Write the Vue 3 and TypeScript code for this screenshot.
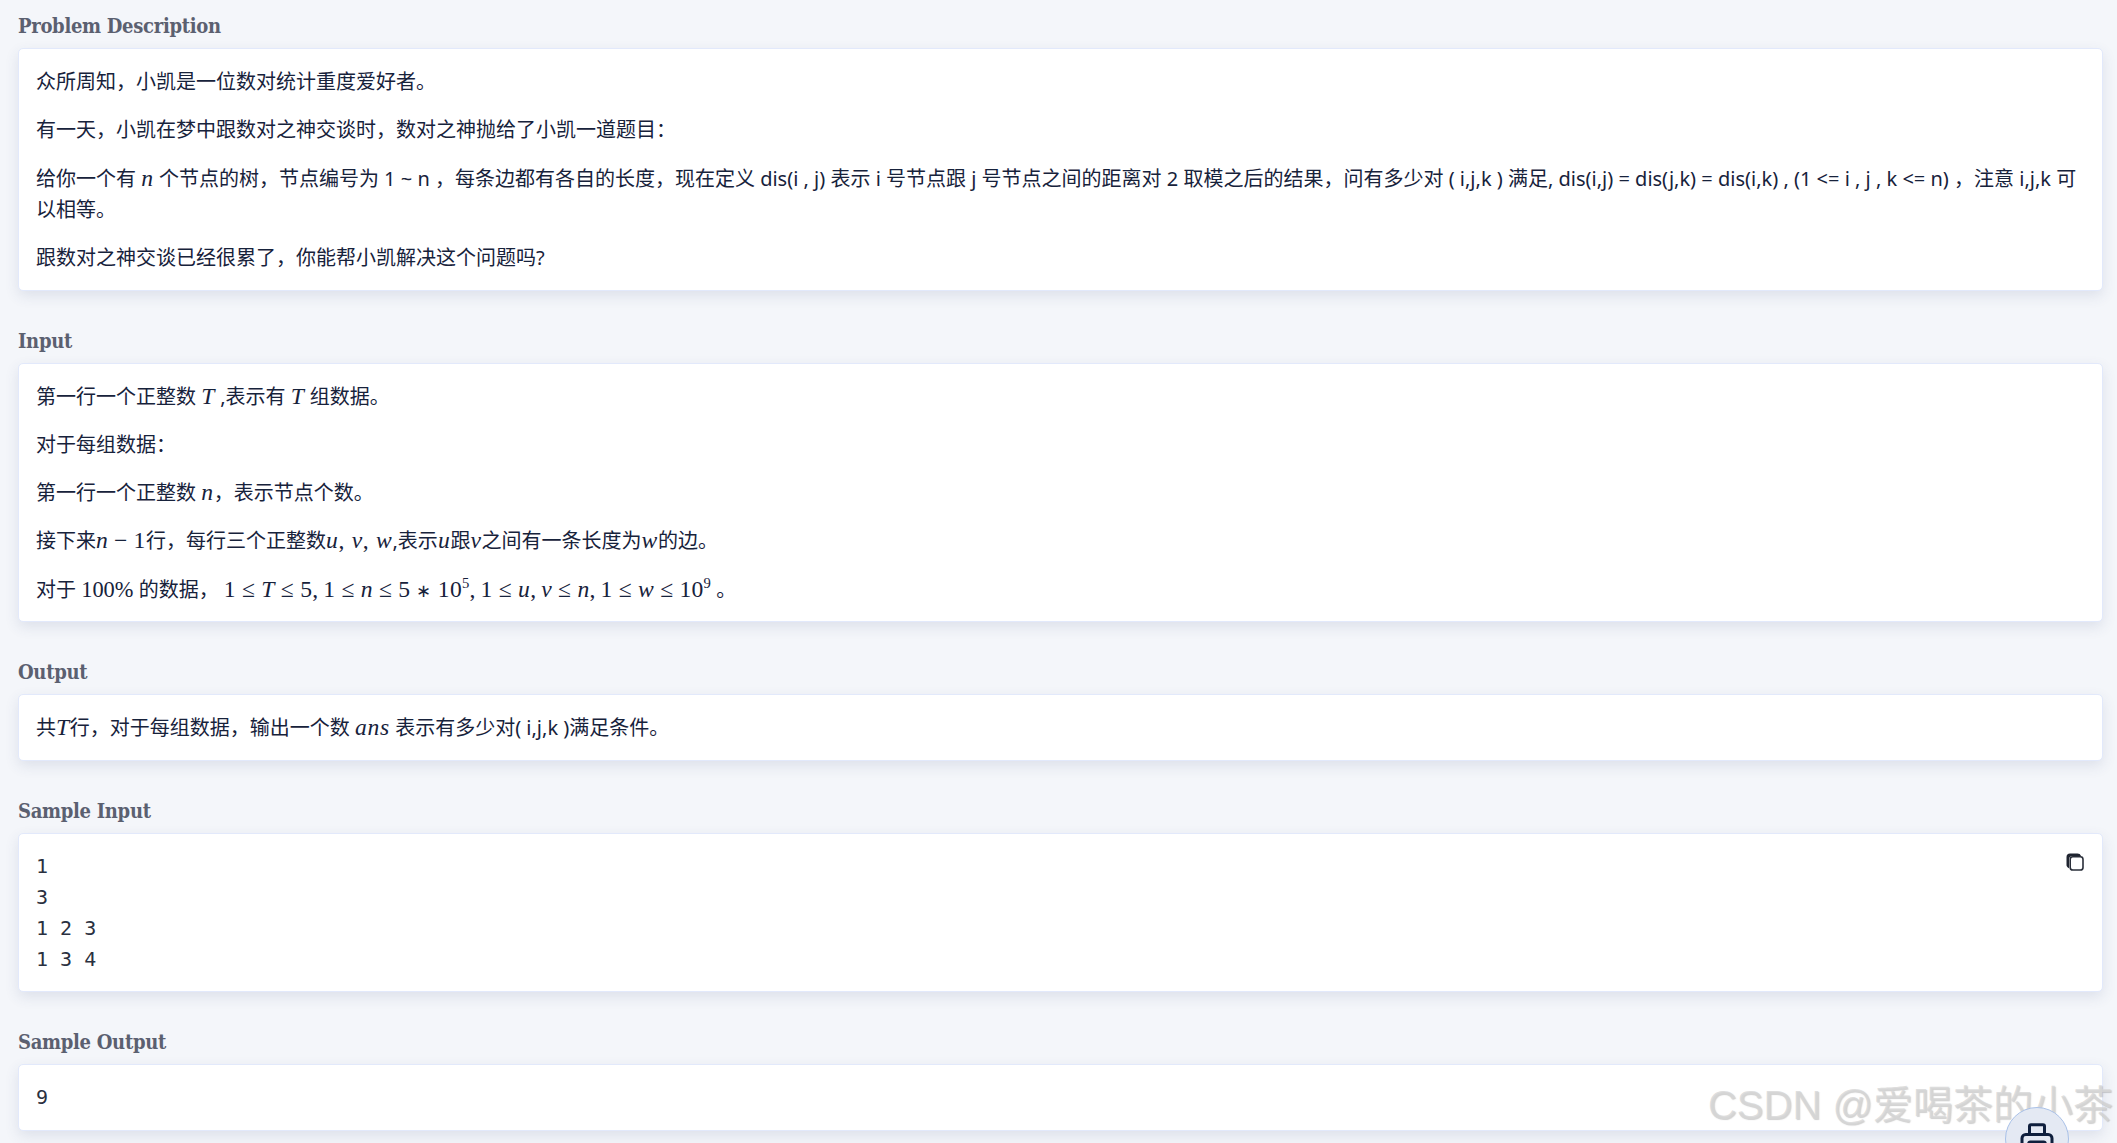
<script setup lang="ts">
const sampleInput: string = '1\n3\n1 2 3\n1 3 4'
const sampleOutput: string = '9'
</script>

<template>
  <main class="page">
    <section class="section">
      <h2>Problem Description</h2>
      <div class="card">
        <p>众所周知，小凯是一位数对统计重度爱好者。</p>
        <p>有一天，小凯在梦中跟数对之神交谈时，数对之神抛给了小凯一道题目：</p>
        <p>给你一个有 <i class="m">n</i> 个节点的树，节点编号为 1 ~ n ，每条边都有各自的长度，现在定义 dis(i , j) 表示 i 号节点跟 j 号节点之间的距离对 2 取模之后的结果，问有多少对 ( i,j,k ) 满足, dis(i,j) = dis(j,k) = dis(i,k) , (1 &lt;= i , j , k &lt;= n) ，注意 i,j,k 可以相等。</p>
        <p>跟数对之神交谈已经很累了，你能帮小凯解决这个问题吗?</p>
      </div>
    </section>

    <section class="section">
      <h2>Input</h2>
      <div class="card">
        <p>第一行一个正整数 <i class="m">T</i> ,表示有 <i class="m">T</i> 组数据。</p>
        <p>对于每组数据：</p>
        <p>第一行一个正整数 <i class="m">n</i>，表示节点个数。</p>
        <p>接下来<i class="m">n</i><span class="u">&#8201;−&#8201;1</span>行，每行三个正整数<i class="m">u</i><span class="u">, </span><i class="m">v</i><span class="u">, </span><i class="m">w</i>,表示<i class="m">u</i>跟<i class="m">v</i>之间有一条长度为<i class="m">w</i>的边。</p>
        <p>对于 <span class="u pct">100%</span> 的数据， <span class="u formula">1 ≤ <i>T</i> ≤ 5,&#8201;1 ≤ <i>n</i> ≤ 5 <span class="ast">∗</span> 10<sup>5</sup>,&#8201;1 ≤ <i>u</i>,&#8201;<i>v</i> ≤ <i>n</i>,&#8201;1 ≤ <i>w</i> ≤ 10<sup>9</sup></span> 。</p>
      </div>
    </section>

    <section class="section">
      <h2>Output</h2>
      <div class="card">
        <p>共<i class="m">T</i>行，对于每组数据，输出一个数 <i class="m">ans</i> 表示有多少对( i,j,k )满足条件。</p>
      </div>
    </section>

    <section class="section">
      <h2>Sample Input</h2>
      <div class="card sample">
        <pre>{{ sampleInput }}</pre>
        <svg class="copy" viewBox="0 0 18 18" width="18" height="18" aria-hidden="true">
          <path d="M4 0.5h7.5a4 4 0 0 1 3.6 2.4H6.5a3.5 3.5 0 0 0-3.5 3.5v8.8A4 4 0 0 1 0.5 11V4A3.5 3.5 0 0 1 4 0.5Z" fill="#1f2430" />
          <rect x="4.2" y="3.8" width="12.8" height="13.2" rx="2.6" fill="#fff" stroke="#2a2f3a" stroke-width="1.6" />
        </svg>
      </div>
    </section>

    <section class="section">
      <h2>Sample Output</h2>
      <div class="card sample">
        <pre>{{ sampleOutput }}</pre>
      </div>
    </section>

    <div class="watermark">CSDN @爱喝茶的小茶</div>
    <button class="print" type="button" aria-label="打印">
      <svg viewBox="0 0 24 24" width="36" height="36" fill="none" stroke="#0f1f3d" stroke-width="2" stroke-linejoin="round" stroke-linecap="round" aria-hidden="true">
        <path d="M7 9V3.500a1 1 0 0 1 1-1h8a1 1 0 0 1 1 1V9" />
        <path d="M6 18H4.500A2.500 2.500 0 0 1 2 15.500V11.500A2.500 2.500 0 0 1 4.500 9h15a2.500 2.500 0 0 1 2.500 2.500v4a2.500 2.500 0 0 1-2.500 2.500H18" />
        <rect x="6.500" y="14" width="11" height="8" rx="1" />
      </svg>
    </button>
  </main>
</template>

<style>
html,
body {
  margin: 0;
  height: 100%;
  overflow: hidden;
  background: #f4f6fa;
}
</style>

<style scoped>
.page {
  position: relative;
  box-sizing: border-box;
  height: 1143px;
  overflow: hidden;
  padding: 10px 14px 0 18px;
  background: #f4f6fa;
  font-family: "Noto Sans", "Noto Sans CJK SC", sans-serif;
  color: #17223b;
}

.section {
  margin-bottom: 33.800px;
}

h2 {
  margin: 0 0 6px;
  font-family: "DejaVu Serif", "Liberation Serif", serif;
  font-stretch: condensed;
  font-size: 20px;
  letter-spacing: -0.3px;
  line-height: 32px;
  font-weight: 700;
  color: #5b6070;
}

.card {
  position: relative;
  box-sizing: border-box;
  padding: 17.300px 17px 16.300px;
  background: #fff;
  border: 1px solid #e2e9fb;
  border-radius: 5px;
  box-shadow: 0 5px 14px rgba(60, 75, 120, 0.12);
  font-size: 20px;
  line-height: 31.360px;
}

p {
  margin: 0 0 16.800px;
}

p:last-child {
  margin-bottom: 0;
}

.m,
.u {
  font-family: "Liberation Serif", serif;
  font-size: 1.180em;
  line-height: 0;
  letter-spacing: 0.03em;
}

.pct {
  font-size: 1.120em;
  letter-spacing: 0;
}

.formula {
  letter-spacing: 0.01em;
}

.ast {
  font-size: 0.75em;
}

sup {
  font-size: 0.62em;
  line-height: 0;
}

pre {
  margin: 0;
  font-family: "DejaVu Sans Mono", monospace;
  font-size: 20px;
  line-height: 31px;
  color: #2a3040;
}

.copy {
  position: absolute;
  top: 19px;
  right: 18px;
}

.watermark {
  position: absolute;
  right: 4px;
  bottom: 15px;
  font-family: "Liberation Sans", "Noto Sans CJK SC", sans-serif;
  font-size: 40px;
  line-height: 46px;
  white-space: nowrap;
  color: rgba(215, 215, 215, 0.8);
  text-shadow: 1px 1px 1px rgba(120, 120, 120, 0.35);
  pointer-events: none;
}

.print {
  position: absolute;
  left: 2005px;
  top: 1107px;
  box-sizing: border-box;
  width: 64px;
  height: 64px;
  padding: 13px 0 0;
  display: flex;
  justify-content: center;
  align-items: flex-start;
  background: #e4e9f3;
  border: 1px solid #a9c1e8;
  border-radius: 50%;
}
</style>
